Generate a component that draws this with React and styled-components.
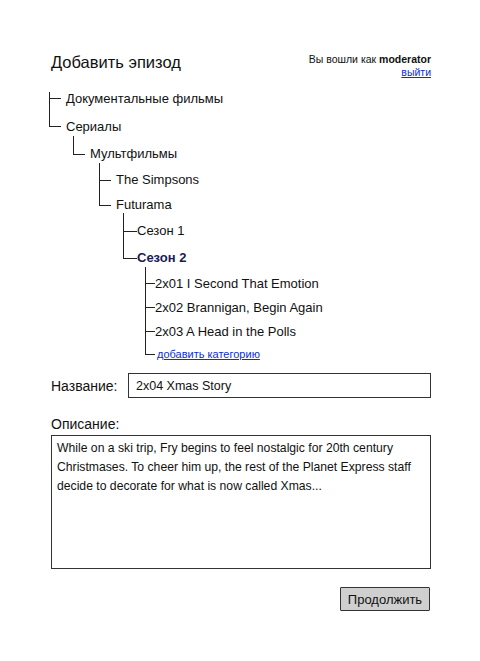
import React from 'react'
import styled, { createGlobalStyle, css } from 'styled-components'

const GlobalStyle = createGlobalStyle`
  html, body {
    margin: 0;
    padding: 0;
    background: #fff;
  }
  body {
    font-family: "Liberation Sans", Arial, sans-serif;
    color: #111;
  }
`;

const Page = styled.div`
  width: 380px;
  padding: 50px 49px 40px 51px;
`;

const Header = styled.div`
  display: flex;
  justify-content: space-between;
  align-items: flex-start;
`;

const Title = styled.h1`
  margin: 0;
  font-size: 16.5px;
  font-weight: normal;
  line-height: 24px;
`;

const UserBox = styled.div`
  text-align: right;
  font-size: 10.5px;
  line-height: 13px;
  padding-top: 3px;
  b { font-weight: bold; }
`;

const Link = styled.a`
  color: #0a2fd6;
  text-decoration: underline;
  cursor: pointer;
  font-size: ${p => p.$size || 10.5}px;
`;

const Tree = styled.ul`
  list-style: none;
  margin: 5px 0 0 -2px;
  padding: 0;
`;

const Branch = styled.ul`
  list-style: none;
  margin: 0 0 0 ${p => p.$indent}px;
  padding: 0;
`;

const Node = styled.li`
  position: relative;
  padding-left: ${p => p.$tick + p.$gap}px;

  &::before {
    content: '';
    position: absolute;
    left: 0;
    top: ${p => (p.$first ? (p.$root ? p.$row / 2 - 6 : -4) : 0)}px;
    height: ${p => (p.$first ? (p.$root ? 6 : p.$row / 2 + 4) : p.$row / 2)}px;
    width: ${p => p.$tick}px;
    border-left: 1.5px solid #222;
    border-bottom: 1.5px solid #222;
  }

  ${p => !p.$last && css`
    &::after {
      content: '';
      position: absolute;
      left: 0;
      top: ${p.$row / 2}px;
      bottom: 0;
      border-left: 1.5px solid #222;
    }
  `}
`;

const Label = styled.div`
  height: ${p => p.$row}px;
  display: flex;
  align-items: center;
  font-size: 13px;
  white-space: nowrap;
  ${p => p.$active && css`
    font-weight: bold;
    color: #1b1b55;
  `}
`;

const FieldRow = styled.div`
  display: flex;
  align-items: center;
  margin-top: 9px;
`;

const FieldLabel = styled.label`
  font-size: 14px;
  width: 77px;
  flex: none;
`;

const TextInput = styled.div`
  flex: 1;
  height: 25px;
  box-sizing: border-box;
  border: 1.5px solid #333;
  padding: 0 7px;
  display: flex;
  align-items: center;
  font-size: 12.5px;
`;

const BlockLabel = styled.div`
  font-size: 14px;
  line-height: 18px;
  margin-top: 17px;
`;

const TextArea = styled.div`
  margin-top: 2px;
  height: 134px;
  box-sizing: border-box;
  border: 1.5px solid #333;
  padding: 3px 5px;
  font-size: 12.2px;
  line-height: 19px;
`;

const Actions = styled.div`
  display: flex;
  justify-content: flex-end;
  margin-top: 18px;
  padding-right: 1px;
`;

const Button = styled.button`
  width: 90px;
  height: 24px;
  box-sizing: border-box;
  background: #cfcfcf;
  border: 1.5px solid #333;
  border-radius: 1px;
  font-family: inherit;
  font-size: 13px;
  color: #111;
  padding: 0;
  cursor: pointer;
`;

// per-level geometry: indent of the branch, tick length, gap to text, row height
const levels = [
  { indent: 0, tick: 11, gap: 6, row: 28 },
  { indent: 24, tick: 11, gap: 6, row: 27 },
  { indent: 26, tick: 11, gap: 6, row: 25 },
  { indent: 24, tick: 13, gap: 1, row: 27 },
  { indent: 22, tick: 9, gap: 1, row: 24 },
];

const data = [
  { label: 'Документальные фильмы' },
  {
    label: 'Сериалы',
    children: [
      {
        label: 'Мультфильмы',
        children: [
          { label: 'The Simpsons' },
          {
            label: 'Futurama',
            children: [
              { label: 'Сезон 1' },
              {
                label: 'Сезон 2',
                active: true,
                children: [
                  { label: '2x01 I Second That Emotion' },
                  { label: '2x02 Brannigan, Begin Again' },
                  { label: '2x03 A Head in the Polls' },
                  { label: 'добавить категорию', link: true },
                ],
              },
            ],
          },
        ],
      },
    ],
  },
];

function TreeNodes({ items, level }) {
  const g = levels[level];
  return items.map((item, i) => {
    const row = item.link ? 21 : g.row;
    const next = levels[level + 1];
    return (
      <Node
        key={item.label}
        $tick={g.tick}
        $gap={item.link ? g.gap + 2 : g.gap}
        $row={row}
        $first={i === 0}
        $last={i === items.length - 1}
        $root={level === 0}
      >
        <Label $row={row} $active={item.active}>
          {item.link ? <Link $size={11}>{item.label}</Link> : item.label}
        </Label>
        {item.children && (
          <Branch $indent={next.indent - g.tick - g.gap}>
            <TreeNodes items={item.children} level={level + 1} />
          </Branch>
        )}
      </Node>
    );
  });
}

export default function App() {
  return (
    <Page>
      <GlobalStyle />
      <Header>
        <Title>Добавить эпизод</Title>
        <UserBox>
          <div>Вы вошли как <b>moderator</b></div>
          <Link>выйти</Link>
        </UserBox>
      </Header>

      <Tree>
        <TreeNodes items={data} level={0} />
      </Tree>

      <FieldRow>
        <FieldLabel>Название:</FieldLabel>
        <TextInput>2x04 Xmas Story</TextInput>
      </FieldRow>

      <BlockLabel>Описание:</BlockLabel>
      <TextArea>
        While on a ski trip, Fry begins to feel nostalgic for 20th century
        Christmases. To cheer him up, the rest of the Planet Express staff
        decide to decorate for what is now called Xmas...
      </TextArea>

      <Actions>
        <Button>Продолжить</Button>
      </Actions>
    </Page>
  );
}
